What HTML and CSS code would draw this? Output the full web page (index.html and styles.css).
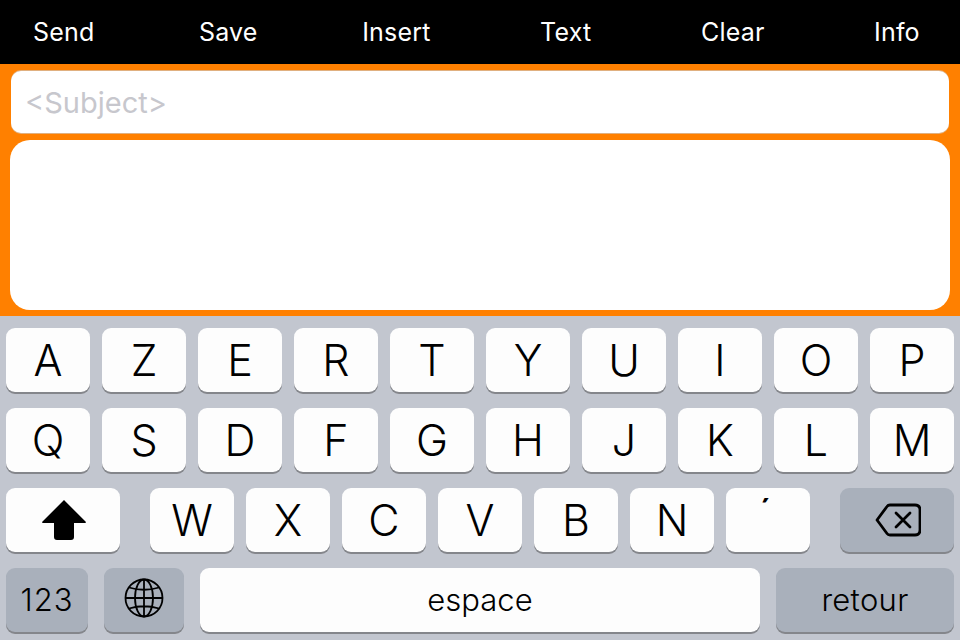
FILE: index.html
```html
<!DOCTYPE html>
<html lang="fr">
<head>
<meta charset="utf-8">
<title>Mail</title>
<link rel="stylesheet" href="styles.css">
</head>
<body>
<div class="app">
  <nav class="toolbar">
    <span>Send</span><span>Save</span><span>Insert</span><span class="wide">Text</span><span class="wide">Clear</span><span class="wide">Info</span>
  </nav>
  <main class="compose">
    <div class="subject">&lt;Subject&gt;</div>
    <div class="body-box"></div>
  </main>
  <section class="keyboard">
    <div class="row">
      <div class="key">A</div><div class="key">Z</div><div class="key">E</div><div class="key">R</div><div class="key">T</div><div class="key">Y</div><div class="key">U</div><div class="key">I</div><div class="key">O</div><div class="key">P</div>
    </div>
    <div class="row">
      <div class="key">Q</div><div class="key">S</div><div class="key">D</div><div class="key">F</div><div class="key">G</div><div class="key">H</div><div class="key">J</div><div class="key">K</div><div class="key">L</div><div class="key">M</div>
    </div>
    <div class="row">
      <div class="key shift">
        <svg class="shift-icon" width="44" height="40" viewBox="0 0 44 40"><path d="M22 0 L44 22 Q44 23 43 23 H32 V37 Q32 40 29 40 H15 Q12 40 12 37 V23 H1 Q0 23 0 22 Z" fill="#000"/></svg>
      </div>
      <div class="letters">
        <div class="key">W</div><div class="key">X</div><div class="key">C</div><div class="key">V</div><div class="key">B</div><div class="key">N</div><div class="key accent"><span>´</span></div>
      </div>
      <div class="key dark del">
        <svg class="del-icon" width="46" height="34" viewBox="0 0 46 34"><path d="M15 2 H40 Q45 2 45 7 V27 Q45 32 40 32 H15 Q13 32 12 30.5 L2 17 L12 3.500 Q13 2 15 2 Z" fill="none" stroke="#000" stroke-width="2.800" stroke-linejoin="round"/><path d="M21 10 L35 24 M35 10 L21 24" stroke="#000" stroke-width="2.800" stroke-linecap="round"/></svg>
      </div>
    </div>
    <div class="row bottom">
      <div class="key dark num">123</div>
      <div class="key dark globe">
        <svg class="globe-icon" width="40" height="40" viewBox="0 0 40 40" fill="none" stroke="#000" stroke-width="1.800"><circle cx="20" cy="20" r="18.500"/><ellipse cx="20" cy="20" rx="9" ry="18.500"/><path d="M20 1.500 V38.500 M1.500 20 H38.500 M5 9.500 Q20 14 35 9.500 M5 30.500 Q20 26 35 30.500"/></svg>
      </div>
      <div class="key space">espace</div>
      <div class="key dark ret">retour</div>
    </div>
  </section>
</div>
</body>
</html>
```
FILE: styles.css
```css
html, body {
  margin: 0;
  padding: 0;
}

body {
  width: 960px;
  height: 640px;
  overflow: hidden;
  font-family: Inter, "Liberation Sans", sans-serif;
}

.app {
  display: flex;
  flex-direction: column;
  height: 640px;
}

.toolbar {
  height: 64px;
  box-sizing: border-box;
  background: #000;
  color: #fff;
  display: flex;
  gap: 104.5px;
  align-items: center;
  padding: 0 0 0 33px;
  font-size: 25px;
  letter-spacing: 0.2px;
}

.toolbar .wide {
  margin-left: 5px;
}

.compose {
  height: 252px;
  box-sizing: border-box;
  background: #ff8000;
  padding: 7px 10px 6px;
  display: flex;
  flex-direction: column;
  gap: 7px;
}

.subject {
  height: 62px;
  margin: 0 1px;
  box-sizing: border-box;
  background: #fff;
  border-radius: 10px;
  box-shadow: 0 -1px 0 #e0b080, 0 1px 0 #e0b080;
  color: #c7c7cd;
  font-size: 29px;
  line-height: 64px;
  padding-left: 14px;
}

.body-box {
  flex: 1;
  background: #fff;
  border-radius: 20px;
}

.keyboard {
  flex: 1;
  background: #c2c6cf;
  padding: 12px 6px 0;
  display: flex;
  flex-direction: column;
  gap: 16px;
}

.row {
  display: flex;
  gap: 12px;
}

.letters {
  display: flex;
  gap: 12px;
  margin: 0 18px;
}

.key {
  width: 84px;
  height: 64px;
  box-sizing: border-box;
  background: #fdfdfd;
  border-radius: 9px;
  box-shadow: 0 2px 0 #84868b;
  color: #000;
  display: flex;
  align-items: center;
  justify-content: center;
  font-size: 43px;
  font-weight: 340;
}

.key.dark {
  background: #a9b0bb;
}

.shift,
.del {
  width: 114px;
}

.shift-icon {
  margin-left: 2px;
}

.del-icon {
  margin-left: 2px;
}

.globe-icon {
  margin: 0 1px 2px 0;
}

.accent span {
  font-size: 30px;
  font-weight: 700;
  margin: 0 5px 20px 0;
}

.row.bottom {
  gap: 16px;
}

.row.bottom .key {
  font-size: 31px;
  padding-bottom: 2px;
}

.row.bottom .num {
  letter-spacing: 1px;
}

.row.bottom .ret {
  letter-spacing: 0.3px;
}

.num {
  width: 82px;
}

.globe {
  width: 80px;
}

.space {
  width: 560px;
}

.ret {
  width: 178px;
}
```
